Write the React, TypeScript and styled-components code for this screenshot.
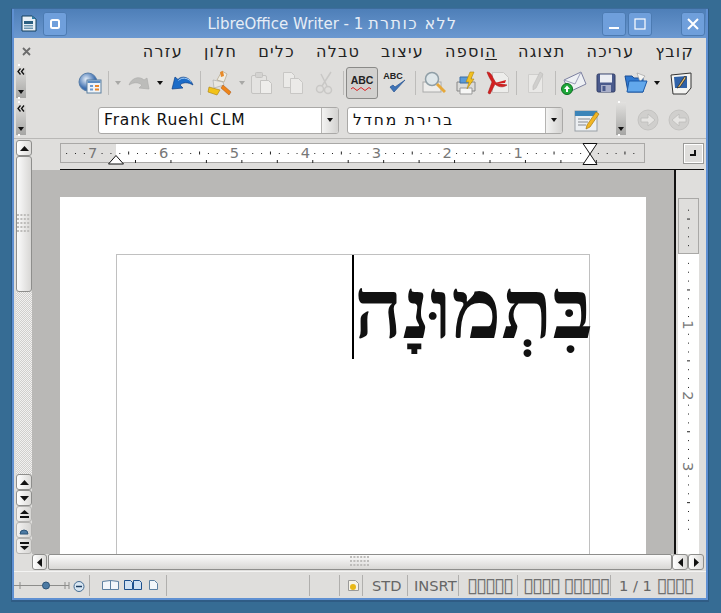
import React from 'react';
import styled, { createGlobalStyle } from 'styled-components';

const GlobalStyle = createGlobalStyle`
  html, body {
    margin: 0;
    padding: 0;
    height: 100%;
    background: #366c94;
    font-family: "DejaVu Sans", sans-serif;
    overflow: hidden;
  }
`;

const UI = '#dfdedc';

const Desktop = styled.div`
  padding: 8px 0 0 11px;
`;

const Frame = styled.div`
  width: 698px;
  height: 594px;
  box-sizing: border-box;
  display: flex;
  flex-direction: column;
  border: 1px solid #2f5c85;
  border-top-color: #3d6c9c;
  border-bottom-width: 2px;
  background: #5f90d2;
  padding: 0 2px 2px 2px;
`;

const TitleBar = styled.div`
  height: 29px;
  flex: none;
  display: flex;
  align-items: center;
  padding: 0 3px 0 6px;
  background: linear-gradient(#4e7fb8, #6b98d0);
`;

const AppIcon = styled.div`
  width: 17px;
  height: 17px;
  margin-right: 6px;
  display: flex;
`;

const WinButton = styled.div<{ $gap?: number }>`
  width: 24px;
  height: 24px;
  box-sizing: border-box;
  margin-left: ${(p) => p.$gap ?? 0}px;
  border: 1px solid #4c7bb2;
  border-radius: 3px;
  background: #6f9fdb;
  display: flex;
  align-items: center;
  justify-content: center;
  flex: none;
`;

const TitleText = styled.div`
  flex: none;
  width: 535px;
  box-sizing: border-box;
  padding-left: 36px;
  padding-right: 40px;
  font-size: 15px;
  color: #e6edf6;
  direction: rtl;
  text-align: center;
  white-space: nowrap;
`;

const TitleHebrew = styled.span`
  font-size: 16px;
  letter-spacing: 1.4px;
`;

const Content = styled.div`
  flex: 1;
  min-height: 0;
  background: ${UI};
  display: flex;
  flex-direction: column;
`;

const MenuBar = styled.div`
  height: 26px;
  flex: none;
  display: flex;
  direction: rtl;
  align-items: center;
  gap: 21px;
  padding: 0 12px 0 8px;
  font-size: 16px;
  letter-spacing: 1.25px;
  color: #222;
`;

const MenuItem = styled.span`
  white-space: nowrap;
  & u {
    text-underline-offset: 2px;
  }
`;

const MenuClose = styled.span`
  margin-right: auto;
  display: flex;
`;

const ToolRow = styled.div<{ $h: number }>`
  height: ${(p) => p.$h}px;
  flex: none;
  display: flex;
  align-items: center;
  padding-left: 2px;
`;

const Grip = styled.div<{ $left?: number; $top?: number }>`
  position: relative;
  width: 10px;
  height: 33px;
  flex: none;
  align-self: flex-start;
  margin-top: ${(p) => p.$top ?? 1}px;
  margin-left: ${(p) => p.$left ?? 0}px;
  background: linear-gradient(#e2e1df, #a6a6a4);
  display: flex;
  flex-direction: column;
  align-items: center;
  justify-content: flex-end;
  padding-bottom: 4px;
  box-sizing: border-box;
  &::before,
  &::after {
    content: '';
    position: absolute;
    left: 2px;
    width: 2px;
    height: 2px;
    background: #fff;
  }
  &::before {
    top: -1px;
  }
  &::after {
    bottom: -1px;
  }
`;

const GripChevrons = styled.svg`
  position: absolute;
  top: 3px;
  left: 1px;
`;

const Caret = styled.span`
  width: 0;
  height: 0;
  border-left: 3.5px solid transparent;
  border-right: 3.5px solid transparent;
  border-top: 4px solid #111;
`;

const Slot = styled.div<{ $w: number; $on?: boolean }>`
  width: ${(p) => p.$w}px;
  height: 32px;
  box-sizing: border-box;
  flex: none;
  display: flex;
  align-items: center;
  justify-content: center;
  border-radius: 3px;
  ${(p) => (p.$on ? 'background:#d2d1cf;border:1px solid #8a8a88;' : '')}
`;

const ToolSep = styled.div`
  width: 1px;
  height: 24px;
  background: #bdbcba;
`;

const DropArrow = styled.span<{ $off?: boolean }>`
  width: 0;
  height: 0;
  border-left: 3px solid transparent;
  border-right: 3px solid transparent;
  border-top: 4px solid ${(p) => (p.$off ? '#a8a8a6' : '#111')};
`;

const Combo = styled.div<{ $w: number }>`
  width: ${(p) => p.$w}px;
  height: 27px;
  box-sizing: border-box;
  flex: none;
  display: flex;
  border: 1px solid #aaa9a7;
  border-radius: 3px;
  background: #fff;
  overflow: hidden;
`;

const ComboText = styled.div<{ $rtl?: boolean }>`
  flex: 1;
  padding: 0 5px;
  font-size: 15.5px;
  line-height: 24px;
  color: #111;
  letter-spacing: ${(p) => (p.$rtl ? 1.8 : 0.85)}px;
  direction: ${(p) => (p.$rtl ? 'rtl' : 'ltr')};
  text-align: left;
  white-space: nowrap;
`;

const ComboButton = styled.div`
  width: 16px;
  flex: none;
  border-left: 1px solid #b5b4b2;
  background: linear-gradient(90deg, #f3f3f2, #d3d2d0);
  display: flex;
  align-items: center;
  justify-content: center;
`;

const Main = styled.div`
  flex: 1;
  min-height: 0;
  display: flex;
  padding-left: 2px;
  border-top: 1px solid #b9b8b6;
`;

const VScroll = styled.div`
  width: 16px;
  flex: none;
  padding-top: 1px;
  display: flex;
  flex-direction: column;
`;

const ArrowButton = styled.div<{ $h?: number; $w?: number }>`
  width: ${(p) => p.$w ?? 16}px;
  height: ${(p) => p.$h ?? 16}px;
  box-sizing: border-box;
  flex: none;
  border: 1px solid #8e8e8c;
  border-radius: 3px;
  background: linear-gradient(90deg, #ffffff, #dcdbd9);
  display: flex;
  align-items: center;
  justify-content: center;
`;

const NavButton = styled(ArrowButton)`
  border-color: #b4b3b1;
  background: linear-gradient(90deg, #f3f2f1, #d6d5d3);
`;

const VThumb = styled.div`
  height: 136px;
  flex: none;
  box-sizing: border-box;
  border: 1px solid #8e8e8c;
  border-radius: 3px;
  background: linear-gradient(90deg, #fbfbfb, #d8d7d5);
  display: flex;
  align-items: center;
  justify-content: center;
`;

const Dither = styled.div`
  flex: 1;
  background: repeating-conic-gradient(#d0cfcd 0 25%, #f2f1f0 0 50%) 0 0 / 2px 2px;
`;

const Workspace = styled.div`
  flex: 1;
  min-width: 0;
  display: flex;
  flex-direction: column;
`;

const RulerRow = styled.div`
  height: 30px;
  box-sizing: border-box;
  flex: none;
  display: flex;
  align-items: flex-start;
  padding: 4px 2px 0 28px;
  overflow: visible;
`;

const CornerButton = styled.div`
  width: 21px;
  height: 21px;
  box-sizing: border-box;
  margin-left: 37px;
  border: 1px solid #9a9a98;
  outline: 1px solid #fff;
  outline-offset: -2px;
  background: ${UI};
  display: flex;
  align-items: center;
  justify-content: center;
`;

const RulerLine = styled.div`
  height: 1px;
  flex: none;
  margin: 0 2px 0 28px;
  background: #111;
`;

const DocRow = styled.div`
  flex: 1;
  min-height: 0;
  display: flex;
`;

const DocView = styled.div`
  flex: 1;
  min-width: 0;
  overflow: hidden;
  background: #b9b8b6;
  padding: 27px 0 0 28px;
`;

const Page = styled.div`
  width: 586px;
  height: 900px;
  box-sizing: border-box;
  background: #fff;
  padding: 57px 56px 0;
`;

const TextFrame = styled.div`
  height: 700px;
  box-sizing: border-box;
  border: 1px solid #c0c0c0;
  direction: rtl;
  font-family: "Liberation Serif", serif;
  font-weight: bold;
  font-size: 84px;
  color: #111;
`;

const TextLine = styled.div`
  display: inline-block;
  vertical-align: top;
  height: 104px;
  line-height: 110px;
  border-left: 2px solid #000;
  margin-right: -4px;
  white-space: nowrap;
`;

const VRulerColumn = styled.div`
  width: 32px;
  flex: none;
  box-sizing: border-box;
  border-left: 2px solid #111;
  padding: 28px 0 0 2px;
  overflow: hidden;
`;

const BottomRow = styled.div`
  height: 16px;
  flex: none;
  display: flex;
  padding: 0 2px 0 18px;
`;

const HThumb = styled.div`
  flex: 1;
  box-sizing: border-box;
  margin-left: 1px;
  border: 1px solid #8e8e8c;
  border-radius: 2px;
  background: linear-gradient(#fbfbfb, #d8d7d5);
  display: flex;
  align-items: center;
  justify-content: center;
`;

const StatusBar = styled.div`
  height: 27px;
  flex: none;
  margin-top: 1px;
  border-top: 1px solid #f4f4f3;
  box-sizing: border-box;
  display: flex;
  align-items: center;
  font-size: 14.67px;
  color: #666;
  white-space: nowrap;
`;

const StatusCell = styled.div<{ $w: number; $pad?: number }>`
  width: ${(p) => p.$w}px;
  height: 21px;
  box-sizing: border-box;
  flex: none;
  display: flex;
  align-items: center;
  padding-left: ${(p) => p.$pad ?? 0}px;
  border-right: 1px solid #b0afad;
`;

const LastCell = styled(StatusCell)`
  border-right: none;
`;

const Tofu = styled.span`
  letter-spacing: -2px;
  font-size: 20px;
  line-height: 21px;
  color: #707070;
`;

/* ---------- drawings ---------- */

const WriterLogo = () => (
  <svg width="17" height="17" viewBox="0 0 17 17">
    <path d="M2 1h10l4 3v12H2z" fill="#e8f0f6" stroke="#123f5c" />
    <path d="M12 1l4 3h-4z" fill="#2f7fa8" />
    <rect x="4" y="6" width="9" height="3" fill="#2b5f80" />
    <rect x="4" y="10" width="9" height="1.5" fill="#6e98b2" />
    <rect x="4" y="12.5" width="9" height="1.5" fill="#6e98b2" />
  </svg>
);

const ToolIcon = ({ name }: { name: string }) => {
  switch (name) {
    case 'globe':
      return (
        <svg width="24" height="24" viewBox="0 0 24 24">
          <defs>
            <radialGradient id="gl" cx="0.4" cy="0.35">
              <stop offset="0" stopColor="#e6eef8" />
              <stop offset="1" stopColor="#3d6fb0" />
            </radialGradient>
          </defs>
          <circle cx="10" cy="11" r="9" fill="url(#gl)" stroke="#5a7fa8" />
          <rect x="9" y="9" width="14" height="13" fill="#eef3f8" stroke="#5c7f9e" />
          <rect x="9.5" y="9.5" width="13" height="2.5" fill="#5b8cc0" />
          <rect x="12" y="14" width="3" height="2" fill="#6a9ad0" />
          <rect x="17" y="14" width="4" height="2" fill="#e8862a" />
          <rect x="12" y="17.5" width="3" height="2" fill="#6a9ad0" />
          <rect x="17" y="17.5" width="4" height="2" fill="#e8862a" />
        </svg>
      );
    case 'redo':
      return (
        <svg width="24" height="18" viewBox="0 0 24 18">
          <path d="M1 11C4 3 12 2 16 6l3-2 2 11-10-1 3-3C10 8 6 8 1 11z" fill="#bcbcba" stroke="#a9a9a7" strokeWidth="0.6" />
        </svg>
      );
    case 'undo':
      return (
        <svg width="24" height="18" viewBox="0 0 24 18">
          <path d="M23 11C20 3 12 1 8 5.5L5 3 2 15l11-1-3-3c3-3 8-3 13 0z" fill="#1c6cc8" stroke="#0d3f86" strokeWidth="0.7" />
          <path d="M21 7.5C17 3.5 12 3 8.5 6.5" fill="none" stroke="#a8d0f6" strokeWidth="1" />
        </svg>
      );
    case 'paint':
      return (
        <svg width="26" height="26" viewBox="0 0 26 26">
          <path d="M10 10l5-9 5 3-3 8z" fill="#f0ede4" stroke="#a89878" strokeWidth="0.6" />
          <path d="M13 2l3-1 1 5-3 1z" fill="#e88a28" />
          <path d="M6 10l10 2 1 3-10 3z" fill="#e9e7e0" stroke="#999" strokeWidth="0.5" />
          <path d="M2 17l11 3-3 5-9-3z" fill="#f2c218" stroke="#a88010" strokeWidth="0.6" />
          <path d="M16 15l8 7-2 3-8-7z" fill="#ee8418" stroke="#a85010" strokeWidth="0.5" />
        </svg>
      );
    case 'paste':
      return (
        <svg width="24" height="24" viewBox="0 0 24 24" fill="#e4e3e1" stroke="#c4c3c1">
          <rect x="1.5" y="4.5" width="15" height="18" rx="1.5" />
          <rect x="5.5" y="1.5" width="7" height="5" rx="1" fill="#d4d3d1" />
          <path d="M10.5 9.5h8l3 3v10h-11z" fill="#eeedeb" />
        </svg>
      );
    case 'copy':
      return (
        <svg width="22" height="24" viewBox="0 0 22 24" fill="#ebeae8" stroke="#c8c7c5">
          <path d="M1.5 1.5h8l3 3v12h-11z" />
          <path d="M8.5 7.5h8l4 4v11h-12z" />
        </svg>
      );
    case 'cut':
      return (
        <svg width="20" height="24" viewBox="0 0 20 24" fill="none" stroke="#c9c8c6" strokeWidth="1.5">
          <path d="M17 1L8 15M7 3l6 12" />
          <circle cx="6" cy="18" r="3.5" />
          <circle cx="14" cy="19" r="3.5" />
        </svg>
      );
    case 'abcWave':
      return (
        <svg width="26" height="22" viewBox="0 0 26 22">
          <text x="13" y="12" textAnchor="middle" fontFamily="Liberation Sans" fontWeight="bold" fontSize="10.5" fill="#222">ABC</text>
          <path d="M2 17q2-3 4 0t4 0 4 0 4 0 4 0" fill="none" stroke="#d22" strokeWidth="1" />
        </svg>
      );
    case 'abcCheck':
      return (
        <svg width="26" height="24" viewBox="0 0 26 24">
          <text x="11" y="8" textAnchor="middle" fontFamily="Liberation Sans" fontWeight="bold" fontSize="9" fill="#222">ABC</text>
          <path d="M8 16l4 5 11-12-10 7-2-2z" fill="#3f74b8" stroke="#2a5590" strokeWidth="0.7" />
        </svg>
      );
    case 'preview':
      return (
        <svg width="24" height="24" viewBox="0 0 24 24">
          <rect x="1" y="11" width="18" height="10" fill="#eeedeb" stroke="#aaa" />
          <circle cx="10" cy="8" r="6.5" fill="#dfe7ea" stroke="#8f9ea6" strokeWidth="1.5" />
          <path d="M15 13l8 8" stroke="#e6a83a" strokeWidth="3" />
        </svg>
      );
    case 'print':
      return (
        <svg width="24" height="24" viewBox="0 0 24 24">
          <path d="M3 11h18v9H3z" fill="#dcdcda" stroke="#888" />
          <path d="M6 6h11v6H6z" fill="#5a9ad8" stroke="#3c6ea4" />
          <path d="M6 17h12v6H6z" fill="#f7f7f6" stroke="#999" />
          <path d="M16 1l-4 10h3l-2 7 7-10h-3l3-7z" fill="#f2c020" stroke="#b08810" strokeWidth="0.6" />
        </svg>
      );
    case 'pdf':
      return (
        <svg width="24" height="24" viewBox="0 0 24 24">
          <path d="M6.5 1.5h11l5 5v15h-16z" fill="#ededeb" stroke="#c8c7c5" />
          <path d="M1 1c3 0 5 3 6 6l3 5 11 2c-4 3-9 2-12-1l-5 10-2-1 4-11C4 8 2 4 1 1z" fill="#d42020" stroke="#a81818" strokeWidth="0.6" />
          <path d="M9 12l11-3-1 3z" fill="#d42020" />
        </svg>
      );
    case 'editDoc':
      return (
        <svg width="20" height="24" viewBox="0 0 20 24">
          <path d="M2.5 3.5h14v18h-14z" fill="#e9e8e6" stroke="#cfcecc" />
          <path d="M14 1l3 2-7 14-3 2 0-4z" fill="#d0cfcd" stroke="#bcbbb9" strokeWidth="0.6" />
        </svg>
      );
    case 'mail':
      return (
        <svg width="26" height="24" viewBox="0 0 26 24">
          <path d="M3 9L20 1l5 12-17 8z" fill="#eef0f4" stroke="#7c80a0" />
          <path d="M3 9l11 4 6-12" fill="none" stroke="#9a9eb8" />
          <circle cx="6" cy="18" r="5.5" fill="#1fa83a" stroke="#0c6e20" />
          <path d="M6 14.5l3 3.5H7v3H5v-3H3z" fill="#fff" />
        </svg>
      );
    case 'save':
      return (
        <svg width="20" height="20" viewBox="0 0 20 20">
          <rect x="1" y="1" width="18" height="18" rx="1.5" fill="#4a5a8c" stroke="#303c64" />
          <rect x="4" y="1.5" width="12" height="8" fill="#eceef4" />
          <rect x="5" y="12" width="10" height="7" fill="#a8aec8" />
          <rect x="6.5" y="13" width="3" height="5" fill="#4a5a8c" />
        </svg>
      );
    case 'open':
      return (
        <svg width="24" height="22" viewBox="0 0 24 22">
          <path d="M1 4h7l2 2h9v14H4z" fill="#2f78d0" stroke="#1c4f94" />
          <path d="M13 1l8 3-5 6z" fill="#f4f4f2" stroke="#999" strokeWidth="0.6" />
          <path d="M5 9h18l-4 11H3z" fill="#62a8ec" stroke="#1c5aa8" />
        </svg>
      );
    case 'newDoc':
      return (
        <svg width="22" height="23" viewBox="0 0 22 23">
          <path d="M1 3l20-2v15l-5 6H3z" fill="#f4f4f2" stroke="#333" />
          <path d="M4 5l13-1v12H5z" fill="#2f62a8" />
          <path d="M15 4l-6 9-2 3 3-1 6-9z" fill="#e8c070" stroke="#222" strokeWidth="0.7" />
        </svg>
      );
    case 'stylist':
      return (
        <svg width="26" height="24" viewBox="0 0 26 24">
          <rect x="1" y="3" width="22" height="20" fill="#eceff2" stroke="#9aa0a6" />
          <rect x="1" y="3" width="22" height="5" fill="#3b84b8" />
          <path d="M4 11h12M4 14h10M4 17h8" stroke="#a8acb0" strokeWidth="1.5" />
          <path d="M22 4l3 2-9 13-4 2 1-4z" fill="#f2b624" stroke="#a87a10" strokeWidth="0.7" />
        </svg>
      );
    case 'next':
    case 'prev':
      return (
        <svg width="22" height="22" viewBox="0 0 22 22">
          <circle cx="11" cy="11" r="10" fill="#d0cfcd" stroke="#c4c3c1" />
          <path
            d={name === 'next' ? 'M4 9h7V5l7 6-7 6v-4H4z' : 'M18 9h-7V5l-7 6 7 6v-4h7z'}
            fill="#e6e5e3"
            stroke="#bdbcba"
            strokeWidth="0.8"
          />
        </svg>
      );
    default:
      return null;
  }
};

const toolbar: { w: number; icon?: string; sep?: boolean; drop?: 'on' | 'off'; on?: boolean }[] = [
  { w: 32, icon: 'globe' },
  { w: 4, sep: true },
  { w: 16, drop: 'off' },
  { w: 28, icon: 'redo' },
  { w: 12, drop: 'on' },
  { w: 32, icon: 'undo' },
  { w: 4, sep: true },
  { w: 36, icon: 'paint' },
  { w: 8, drop: 'off' },
  { w: 32, icon: 'paste' },
  { w: 30, icon: 'copy' },
  { w: 32, icon: 'cut' },
  { w: 6, sep: true },
  { w: 32, icon: 'abcWave', on: true },
  { w: 34, icon: 'abcCheck' },
  { w: 6, sep: true },
  { w: 32, icon: 'preview' },
  { w: 32, icon: 'print' },
  { w: 32, icon: 'pdf' },
  { w: 4, sep: true },
  { w: 35, icon: 'editDoc' },
  { w: 4, sep: true },
  { w: 34, icon: 'mail' },
  { w: 30, icon: 'save' },
  { w: 29, icon: 'open' },
  { w: 14, drop: 'on' },
  { w: 34, icon: 'newDoc' },
];

const menus = ['קובץ', 'עריכה', 'תצוגה', 'הוספה', 'עיצוב', 'טבלה', 'כלים', 'חלון', 'עזרה'];

const PX_PER_UNIT = 70.9;

// horizontal ruler: origin at the right margin of the page
const HRuler = () => {
  const x0 = 529; // right margin relative to the ruler
  const marks = [];
  for (let i = -6; i < 75; i++) {
    const x = x0 - (i * PX_PER_UNIT) / 8;
    if (x < 2 || x > 582) continue;
    if (i % 8 === 0) {
      if (i > 0) {
        marks.push(
          <text key={i} x={x} y="15" textAnchor="middle" fontFamily="DejaVu Sans" fontSize="14.67" fill="#777">
            {i / 8}
          </text>,
        );
      }
    } else if (i % 4 === 0) {
      marks.push(<rect key={i} x={x} y="8.5" width="1" height="3" fill="#222" />);
    } else {
      marks.push(<rect key={i} x={x} y="10" width="1" height="1" fill="#222" />);
    }
  }
  const ticks = [];
  for (let i = 0; i < 14; i++) {
    ticks.push(<rect key={i} x={75 + i * 35.45} y="17" width="1" height="3" fill="#222" />);
  }
  return (
    <svg width="586" height="24" viewBox="0 0 586 24">
      <rect x="0.5" y="0.5" width="584" height="19" fill={UI} stroke="#a9a8a6" />
      <rect x="56" y="1" width="474" height="18" fill="#fff" />
      {marks}
      {ticks}
      <path d="M56 12.5l7.5 8.5h-15z" fill="#fff" stroke="#111" />
      <path d="M523 0.5h14l-7 10.5 7 10.5h-14l7-10.5z" fill="#fff" stroke="#111" />
    </svg>
  );
};

// vertical ruler, digits turned on their side
const VRuler = () => {
  const marks = [];
  const y0 = 56;
  for (let i = -6; i < 32; i++) {
    const y = y0 + (i * PX_PER_UNIT) / 8;
    if (y < 3) continue;
    if (i % 8 === 0) {
      if (i > 0) {
        marks.push(
          <text
            key={i}
            transform={`translate(5 ${y}) rotate(90)`}
            textAnchor="middle"
            fontFamily="DejaVu Sans"
            fontSize="14.67"
            fill="#777"
          >
            {i / 8}
          </text>,
        );
      }
    } else if (i % 4 === 0) {
      marks.push(<rect key={i} x="9" y={y} width="3" height="1" fill="#222" />);
    } else {
      marks.push(<rect key={i} x="10" y={y} width="1" height="1" fill="#222" />);
    }
  }
  return (
    <svg width="22" height="360" viewBox="0 0 22 360" style={{ display: 'block' }}>
      <rect x="0" y="56" width="21" height="304" fill="#fff" />
      <rect x="0.5" y="0.5" width="20" height="55" fill={UI} stroke="#a9a8a6" />
      {marks}
    </svg>
  );
};

const GripDots = ({ wide }: { wide?: boolean }) => {
  const rows = wide ? 3 : 5;
  const cols = wide ? 6 : 4;
  const cells = [];
  for (let r = 0; r < rows; r++) {
    for (let c = 0; c < cols; c++) {
      cells.push(<rect key={`${r}-${c}`} x={c * 3.4} y={r * 4} width="2" height="2" fill="#bdbcba" />);
    }
  }
  return (
    <svg width={wide ? 20 : 14} height={rows * 4}>
      {cells}
    </svg>
  );
};

const Arrow = ({ dir, c = '#111' }: { dir: 'up' | 'down' | 'left' | 'right'; c?: string }) => {
  const d = { up: 'M0 5L4.5 0L9 5z', down: 'M0 0L9 0L4.5 5z', left: 'M5 0V9L0 4.5z', right: 'M0 0V9L5 4.5z' }[dir];
  const w = dir === 'up' || dir === 'down' ? 9 : 5;
  const h = dir === 'up' || dir === 'down' ? 5 : 9;
  return (
    <svg width={w} height={h}>
      <path d={d} fill={c} />
    </svg>
  );
};

const Chevrons = () => (
  <GripChevrons width="8" height="7" viewBox="0 0 8 7">
    <path d="M3.5 0.5L1 3.5l2.5 3M7 0.5L4.5 3.5l2.5 3" fill="none" stroke="#111" strokeWidth="1.3" />
  </GripChevrons>
);

const App = () => (
  <>
    <GlobalStyle />
    <Desktop>
      <Frame>
        <TitleBar>
          <AppIcon>
            <WriterLogo />
          </AppIcon>
          <WinButton>
            <svg width="12" height="12">
              <rect x="2" y="2" width="8" height="8" rx="1.5" fill="none" stroke="#fff" strokeWidth="2" />
            </svg>
          </WinButton>
          <TitleText>
            <TitleHebrew>ללא כותרת</TitleHebrew> 1 - LibreOffice Writer
          </TitleText>
          <WinButton>
            <svg width="12" height="12">
              <rect x="1" y="9" width="10" height="2" fill="#fff" />
            </svg>
          </WinButton>
          <WinButton $gap={2}>
            <svg width="12" height="12">
              <rect x="1" y="1" width="10" height="10" fill="none" stroke="#fff" strokeWidth="1.2" />
            </svg>
          </WinButton>
          <WinButton $gap={29}>
            <svg width="12" height="12">
              <path d="M1 1l10 10M11 1L1 11" stroke="#fff" strokeWidth="2" />
            </svg>
          </WinButton>
        </TitleBar>
        <Content>
          <MenuBar>
            {menus.map((m) =>
              m === 'הוספה' ? (
                <MenuItem key={m}>
                  <u>ה</u>וספה
                </MenuItem>
              ) : (
                <MenuItem key={m}>{m}</MenuItem>
              ),
            )}
            <MenuClose>
              <svg width="9" height="9">
                <path d="M1 1l7 7M8 1L1 8" stroke="#6c6c6c" strokeWidth="1.8" />
              </svg>
            </MenuClose>
          </MenuBar>

          <ToolRow $h={38}>
            <Grip>
              <Chevrons />
              <Caret />
            </Grip>
            <Slot $w={48} />
            {toolbar.map((t, i) => (
              <Slot key={i} $w={t.w} $on={t.on}>
                {t.icon && <ToolIcon name={t.icon} />}
                {t.sep && <ToolSep />}
                {t.drop && <DropArrow $off={t.drop === 'off'} />}
              </Slot>
            ))}
          </ToolRow>

          <ToolRow $h={36}>
            <Grip $top={0}>
              <Chevrons />
              <Caret />
            </Grip>
            <Slot $w={72} />
            <Combo $w={241}>
              <ComboText>Frank Ruehl CLM</ComboText>
              <ComboButton>
                <Caret />
              </ComboButton>
            </Combo>
            <Slot $w={8} />
            <Combo $w={216}>
              <ComboText $rtl>ברירת מחדל</ComboText>
              <ComboButton>
                <Caret />
              </ComboButton>
            </Combo>
            <Slot $w={8} />
            <Slot $w={32}>
              <ToolIcon name="stylist" />
            </Slot>
            <Grip $left={13} $top={0}>
              <Caret />
            </Grip>
            <Slot $w={11} />
            <Slot $w={22}>
              <ToolIcon name="next" />
            </Slot>
            <Slot $w={9} />
            <Slot $w={22}>
              <ToolIcon name="prev" />
            </Slot>
          </ToolRow>

          <Main>
            <VScroll>
              <ArrowButton>
                <Arrow dir="up" />
              </ArrowButton>
              <VThumb>
                <GripDots />
              </VThumb>
              <Dither />
              <ArrowButton>
                <Arrow dir="up" />
              </ArrowButton>
              <ArrowButton>
                <Arrow dir="down" />
              </ArrowButton>
              <NavButton>
                <svg width="9" height="10">
                  <path d="M0 5L4.5 1 9 5zM0 7h9v2H0z" fill="#111" />
                </svg>
              </NavButton>
              <NavButton>
                <svg width="10" height="10">
                  <path d="M1 9a4 4 0 1 1 8 0z" fill="#4d7ba4" stroke="#2c5478" />
                </svg>
              </NavButton>
              <NavButton>
                <svg width="9" height="10">
                  <path d="M0 1h9v2H0zM0 5h9L4.5 9z" fill="#111" />
                </svg>
              </NavButton>
            </VScroll>
            <Workspace>
              <RulerRow>
                <HRuler />
                <CornerButton>
                  <svg width="9" height="9">
                    <path d="M7 1v6H1V5h4V1z" fill="#111" />
                  </svg>
                </CornerButton>
              </RulerRow>
              <RulerLine />
              <DocRow>
                <DocView>
                  <Page>
                    <TextFrame>
                      <TextLine>בִּתְמוּנָה</TextLine>
                    </TextFrame>
                  </Page>
                </DocView>
                <VRulerColumn>
                  <VRuler />
                </VRulerColumn>
              </DocRow>
            </Workspace>
          </Main>

          <BottomRow>
            <ArrowButton $w={15}>
              <Arrow dir="left" />
            </ArrowButton>
            <HThumb>
              <GripDots wide />
            </HThumb>
            <ArrowButton>
              <Arrow dir="left" />
            </ArrowButton>
            <ArrowButton>
              <Arrow dir="right" />
            </ArrowButton>
          </BottomRow>

          <StatusBar>
            <StatusCell $w={76}>
              <svg width="76" height="21">
                <path d="M0 10.5h55" stroke="#8d8d8b" />
                <path d="M6 7v7M51 7v7M55 7v7" stroke="#8d8d8b" />
                <circle cx="32" cy="10.5" r="3.5" fill="#4d7ba4" stroke="#2c5478" />
                <circle cx="65" cy="11.5" r="5" fill="#d8e6f2" stroke="#456c92" />
                <path d="M62 11.5h6" stroke="#1c3c60" strokeWidth="1.5" />
              </svg>
            </StatusCell>
            <StatusCell $w={77} $pad={11}>
              <svg width="60" height="12">
                <g stroke="#5c7fa0" fill="#f2f6fa">
                  <path d="M1.5 2.5l8-1v9h-8zM9.5 1.5l8 1v8h-8z" />
                  <path d="M23.5 1.5h6l2 2v7h-8zM32.5 1.5h6l2 2v7h-8z" fill="#cfe0f2" stroke="#1c4f8c" />
                  <path d="M48.5 1.5h5l3 3v6h-8z" />
                </g>
              </svg>
            </StatusCell>
            <StatusCell $w={143} />
            <StatusCell $w={30} />
            <StatusCell $w={23} $pad={7}>
              <svg width="13" height="13">
                <path d="M1.5 1.5h7l3 3v7h-10z" fill="#f6f3e8" stroke="#999" />
                <circle cx="6" cy="8" r="3" fill="#e8b818" />
              </svg>
            </StatusCell>
            <StatusCell $w={45} $pad={9}>STD</StatusCell>
            <StatusCell $w={51} $pad={6}>INSRT</StatusCell>
            <StatusCell $w={59} $pad={8}>
              <Tofu>▯▯▯▯▯</Tofu>
            </StatusCell>
            <StatusCell $w={93} $pad={5}>
              <Tofu>▯▯▯▯ ▯▯▯▯▯</Tofu>
            </StatusCell>
            <LastCell $w={94} $pad={8}>
              1 / 1&nbsp;<Tofu>▯▯▯▯</Tofu>
            </LastCell>
          </StatusBar>
        </Content>
      </Frame>
    </Desktop>
  </>
);

export default App;
